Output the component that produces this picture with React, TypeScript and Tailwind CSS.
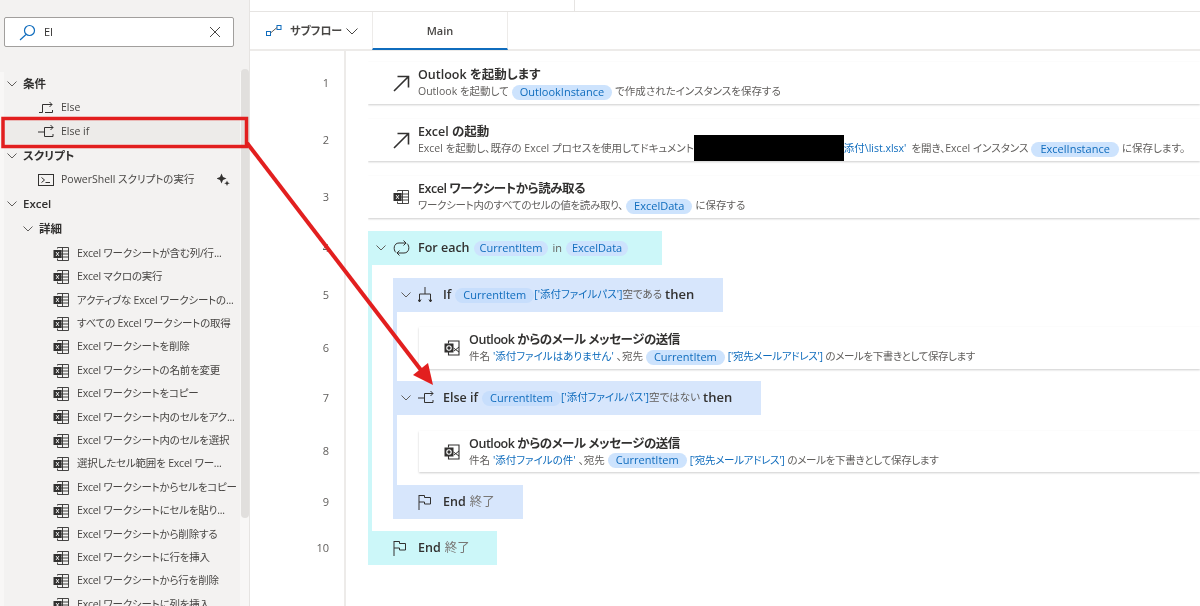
import React from "react";

const font = "font-['Open_Sans','Noto_Sans_CJK_JP',sans-serif] [font-feature-settings:'palt'] blur-[0.3px]";

function Sv({ w, h, children, cls = "" }: { w: number; h: number; children: React.ReactNode; cls?: string }) {
  return (
    <svg width={w} height={h} viewBox={`0 0 ${w} ${h}`} fill="none" stroke="currentColor" strokeWidth="1" className={`shrink-0 ${cls}`}>
      {children}
    </svg>
  );
}

const Chevron = ({ cls = "text-[#605e5c]" }: { cls?: string }) => (
  <Sv w={10} h={6} cls={cls}>
    <path d="M0.5 0.5 L5 5 L9.5 0.5" />
  </Sv>
);

const ElseIcon = () => (
  <Sv w={16} h={14} cls="text-[#323130]">
    <path d="M1 11.5h3.5V3.5H14M11.5 1L14 3.5L11.5 6M7 11.5h7.5M14.5 9v2.5" />
  </Sv>
);
const ElseIfIcon = () => (
  <Sv w={16} h={14} cls="text-[#323130]">
    <path d="M0 7h6.5M6.5 2.5v9H15M15 9v2.5M6.5 2.5H15M12.5 0L15 2.5L12.5 5" />
  </Sv>
);
const IfIcon = () => (
  <Sv w={14} h={16} cls="text-[#323130]">
    <path d="M7 0v7M1.5 15V7h11v8M0 12.5L1.5 15L3 12.5M11 12.5L12.5 15L14 12.5" />
  </Sv>
);
const LoopIcon = () => (
  <Sv w={17} h={16} cls="text-[#323130]">
    <path d="M3 12.5C0 10 0.5 3 6 3h6.5M10.5 0.5L13 3L10.5 5.5M14 3.5C17 6 16.5 13 11 13H4.5M6.5 10.5L4 13L6.5 15.5" />
  </Sv>
);
const FlagIcon = () => (
  <Sv w={14} h={16} cls="text-[#323130]">
    <path d="M1 16V1M1 1.5h5.5v2H12.5v6.5H6.5v-2H1" />
  </Sv>
);
const LaunchIcon = () => (
  <Sv w={17} h={17} cls="text-[#323130]">
    <path d="M1 16L15.5 1.5M4.5 1.5H15.5V12.5" strokeWidth="1.6" />
  </Sv>
);
const ExcelIcon = () => (
  <Sv w={16} h={14} cls="text-[#323130]">
    <path d="M4.5 1.5V0.5H15.5V13.5H4.5V11.5M9.5 0.5V13.5M4.5 4h11M4.5 7h11M4.5 10h11" strokeWidth="0.9" />
    <rect x="0.5" y="3" width="8" height="8" fill="currentColor" stroke="none" />
    <path d="M3 5l3 4M6 5L3 9" stroke="#ffffff" strokeWidth="0.9" />
  </Sv>
);
const OutlookIcon = () => (
  <Sv w={16} h={16} cls="text-[#323130]">
    <path d="M4.5 3.5V1h10.5v6M15 7v8H4.5v-3" strokeWidth="1.1" />
    <rect x="0.5" y="3.5" width="9" height="9" fill="currentColor" stroke="none" />
    <circle cx="5" cy="8" r="2.2" stroke="#ffffff" strokeWidth="1.1" />
    <path d="M9.5 8L15 12M15 7L10 11" strokeWidth="1" />
  </Sv>
);
const SubflowIcon = () => (
  <Sv w={16} h={12} cls="text-[#0f6cbd]">
    <rect x="0.5" y="6.5" width="4" height="4" />
    <rect x="11" y="0.5" width="4" height="4" />
    <path d="M4.5 8L11 2.5" stroke="#605e5c" />
  </Sv>
);

function Pill({ children, bg = "bg-[#cde3fd]", px = "px-[8px]" }: { children: React.ReactNode; bg?: string; px?: string }) {
  return <span className={`${bg} ${px} h-[15px] rounded-full inline-flex items-center text-[#0f6cbd] text-[11px] font-normal shrink-0`}>{children}</span>;
}
const Link = ({ children }: { children: React.ReactNode }) => <span className="text-[#0f6cbd]">{children}</span>;

function Card({ icon, title, children, cls = "", titleCls = "" }: { icon: React.ReactNode; title: string; children: React.ReactNode; cls?: string; titleCls?: string }) {
  return (
    <div className={`h-[42px] bg-white shadow-[0_1px_2px_rgba(0,0,0,0.2)] flex items-center whitespace-nowrap ${cls}`}>
      <div className="w-[50px] pl-[25px] shrink-0 flex">{icon}</div>
      <div className="flex flex-col">
        <div className={`h-[18px] flex items-center text-[12.5px] font-semibold text-[#323130] ${titleCls}`}>{title}</div>
        <div className="h-[15px] flex items-center gap-[3px] text-[10.5px] text-[#605e5c]">{children}</div>
      </div>
    </div>
  );
}

function Head({ w, bg, chevron = true, icon, children }: { w: string; bg: string; chevron?: boolean; icon: React.ReactNode; children: React.ReactNode }) {
  return (
    <div className={`${w} ${bg} h-[34px] flex items-center whitespace-nowrap text-[12.5px] text-[#323130]`}>
      <div className="w-[25px] pl-[8px] shrink-0 flex">{chevron && <Chevron />}</div>
      <div className="w-[25px] shrink-0 flex">{icon}</div>
      <div className="flex items-center gap-[4px]">{children}</div>
    </div>
  );
}

function SideHead({ label, indent = "pl-[3px]", h = "h-[24px]" }: { label: string; indent?: string; h?: string }) {
  return (
    <div className={`${h} ${indent} flex items-center gap-[6px] text-[11.5px] font-semibold text-[#323130]`}>
      <Chevron />
      <span>{label}</span>
    </div>
  );
}

function SideItem({ icon, label, cls = "" }: { icon: React.ReactNode; label: string; cls?: string }) {
  return (
    <div className={`h-[24px] pl-[34px] flex items-center text-[10.5px] text-[#484644] whitespace-nowrap ${cls}`}>
      <div className="w-[23px] shrink-0 flex">{icon}</div>
      <span>{label}</span>
    </div>
  );
}

const excelItems = [
  "Excel ワークシートが含む列/行...",
  "Excel マクロの実行",
  "アクティブな Excel ワークシートの...",
  "すべての Excel ワークシートの取得",
  "Excel ワークシートを削除",
  "Excel ワークシートの名前を変更",
  "Excel ワークシートをコピー",
  "Excel ワークシート内のセルをアク...",
  "Excel ワークシート内のセルを選択",
  "選択したセル範囲を Excel ワー...",
  "Excel ワークシートからセルをコピー",
  "Excel ワークシートにセルを貼り...",
  "Excel ワークシートから削除する",
  "Excel ワークシートに行を挿入",
  "Excel ワークシートから行を削除",
  "Excel ワークシートに列を挿入",
];

const numbers: [string, string][] = [
  ["1", "mt-[11px] h-[42px]"],
  ["2", "mt-[15px] h-[42px]"],
  ["3", "mt-[15px] h-[42px]"],
  ["4", "mt-[13px] h-[34px]"],
  ["5", "mt-[13px] h-[34px]"],
  ["6", "mt-[15px] h-[42px]"],
  ["7", "mt-[12px] h-[34px]"],
  ["8", "mt-[16px] h-[41px]"],
  ["9", "mt-[13px] h-[34px]"],
  ["10", "mt-[12px] h-[34px]"],
];

export default function App() {
  return (
    <div className={`${font} relative w-[1200px] h-[606px] overflow-hidden bg-white flex`}>
      {/* Sidebar */}
      <aside className="w-[250px] shrink-0 h-full bg-[#f3f2f1] border-r border-[#e6e4e2] flex flex-col overflow-hidden">
        <div className="h-[72px] shrink-0 pt-[17px] pl-[4px] pr-[15px]">
          <div className="h-[30px] bg-white border border-[#a19f9d] rounded-[2px] flex items-center pl-[14px] pr-[12px]">
            <svg width="17" height="17" viewBox="0 0 17 17" fill="none" stroke="#0f6cbd" strokeWidth="1.2" className="shrink-0">
              <circle cx="10.5" cy="6.5" r="5" />
              <path d="M7 10.5L1 16" />
            </svg>
            <span className="ml-[8px] text-[11px] text-[#323130]">EI</span>
            <svg width="12" height="12" viewBox="0 0 12 12" fill="none" stroke="#484644" strokeWidth="1" className="ml-auto shrink-0">
              <path d="M1 1L11 11M11 1L1 11" />
            </svg>
          </div>
        </div>
        <div className="flex flex-1 min-h-0 pl-[4px] bg-[#f8f7f6]">
          <div className="flex-1 min-w-0 bg-[#f3f2f1] overflow-hidden">
            <SideHead label="条件" />
            <SideItem icon={<ElseIcon />} label="Else" />
            <SideItem icon={<ElseIfIcon />} label="Else if" cls="bg-[#edebe9]" />
            <SideHead label="スクリプト" />
            <div className="relative">
              <SideItem
                icon={
                  <Sv w={16} h={14} cls="text-[#323130]">
                    <rect x="0.5" y="1.5" width="15" height="11" />
                    <path d="M3.5 4.5L6.5 7L3.5 9.5M7.5 9.5H12" />
                  </Sv>
                }
                label="PowerShell スクリプトの実行"
              />
              <svg width="13" height="13" viewBox="0 0 13 13" fill="#323130" className="absolute left-[213px] top-[5px]">
                <path d="M4.5 0.5L6 4L9.5 5.5L6 7L4.5 10.5L3 7L-0.5 5.5L3 4Z" />
                <path d="M10 7.5L10.8 9.5L12.8 10.2L10.8 11L10 13L9.2 11L7.2 10.2L9.2 9.5Z" />
              </svg>
            </div>
            <SideHead label="Excel" />
            <SideHead label="詳細" indent="pl-[19px]" h="h-[26px]" />
            {excelItems.map((t) => (
              <div key={t} className="h-[23.4px] pl-[49px] flex items-center text-[10.5px] tracking-[-0.2px] text-[#484644] whitespace-nowrap">
                <div className="w-[24px] shrink-0 flex">
                  <ExcelIcon />
                </div>
                <span>{t}</span>
              </div>
            ))}
          </div>
          <div className="w-[8px] ml-[1px] shrink-0 h-[449px] -mt-[3px] bg-[#e1dfdd] rounded-full" />
        </div>
      </aside>

      {/* Main */}
      <main className="flex-1 min-w-0 h-full flex flex-col overflow-hidden">
        <div className="h-[12px] shrink-0 border-b border-[#e6e4e2] flex">
          <div className="w-[325px] border-r border-[#e6e4e2]" />
        </div>
        <div className="h-[39px] shrink-0 border-b-2 border-[#edebe9] flex">
          <div className="w-[122px] pt-[1px] flex items-center pl-[16px]">
            <SubflowIcon />
            <span className="ml-[8px] w-[56px] text-[11px] font-semibold text-[#484644]">サブフロー</span>
            <Sv w={12} h={7} cls="text-[#484644]">
              <path d="M0.5 0.5 L6 6 L11.5 0.5" />
            </Sv>
          </div>
          <div className="w-[136px] pt-[3px] border-x border-[#edebe9] border-b-2 border-b-[#0f6cbd] flex items-center justify-center text-[11px] font-semibold text-[#484644] -mb-[1px]">
            Main
          </div>
        </div>
        <div className="flex-1 min-h-0 flex">
          <div className="w-[96px] shrink-0 border-r-2 border-[#edebe9] flex flex-col">
            {numbers.map(([n, c]) => (
              <div key={n} className={`${c} shrink-0 flex items-center justify-end pr-[15px] text-[11px] text-[#605e5c]`}>
                {n}
              </div>
            ))}
          </div>
          <div className="flex-1 min-w-0 ml-[22px] pt-[11px] overflow-hidden">
            <Card icon={<LaunchIcon />} title="Outlook を起動します">
              <span>Outlook を起動して</span>
              <Pill>OutlookInstance</Pill>
              <span>で作成されたインスタンスを保存する</span>
            </Card>
            <Card cls="mt-[15px]" icon={<LaunchIcon />} title="Excel の起動">
              <span>Excel を起動し、既存の Excel プロセスを使用してドキュメント</span>
              <span className="w-[150px] h-[26px] bg-black shrink-0 -mx-[3px] -mt-[2px]" />
              <Link>添付\list.xlsx'</Link>
              <span className="ml-[2px]">を開き、Excel インスタンス</span>
              <Pill px="px-[9px]">ExcelInstance</Pill>
              <span>に保存します。</span>
            </Card>
            <Card cls="mt-[15px]" titleCls="tracking-[-0.45px]" icon={<ExcelIcon />} title="Excel ワークシートから読み取る">
              <span className="tracking-[-0.3px]">ワークシート内のすべてのセルの値を読み取り、</span>
              <Pill>ExcelData</Pill>
              <span>に保存する</span>
            </Card>

            {/* For each */}
            <div className="mt-[13px]">
              <Head w="w-[294px]" bg="bg-[#ccf7f9]" icon={<LoopIcon />}>
                <span className="font-semibold">For each</span>
                <Pill px="px-[6px]">CurrentItem</Pill>
                <span className="text-[11px] text-[#605e5c]">in</span>
                <Pill px="px-[6px]">ExcelData</Pill>
              </Head>
              <div className="border-l-4 border-[#ccf7f9] pl-[21px] pt-[13px] pb-[12px]">
                <Head w="w-[330px]" bg="bg-[#d7e6fc]" icon={<IfIcon />}>
                  <span className="font-semibold">If</span>
                  <Pill bg="bg-[#c7defc]">CurrentItem</Pill>
                  <span className="text-[10.5px] -ml-[4px]"><Link>['添付ファイルパス']</Link><span className="text-[#605e5c]">空である</span></span>
                  <span className="font-semibold text-[13px] -ml-[1px]">then</span>
                </Head>
                <div className="border-l-4 border-[#d7e6fc] pl-[22px] pt-[15px] pb-[12px]">
                  <Card titleCls="tracking-[-0.45px]" icon={<OutlookIcon />} title="Outlook からのメール メッセージの送信">
                    <span>件名</span>
                    <Link>'添付ファイルはありません'</Link>
                    <span>、宛先</span>
                    <Pill>CurrentItem</Pill>
                    <span className="tracking-[-0.3px] text-[#0f6cbd]">['宛先メールアドレス']</span>
                    <span className="tracking-[-0.4px]">のメールを下書きとして保存します</span>
                  </Card>
                </div>
                <Head w="w-[368px]" bg="bg-[#d7e6fc]" icon={<ElseIfIcon />}>
                  <span className="font-semibold">Else if</span>
                  <Pill bg="bg-[#c7defc]">CurrentItem</Pill>
                  <span className="text-[10.5px] -ml-[4px]"><Link>['添付ファイルパス']</Link><span className="text-[#605e5c]">空ではない</span></span>
                  <span className="font-semibold text-[13px] -ml-[1px]">then</span>
                </Head>
                <div className="border-l-4 border-[#d7e6fc] pl-[22px] pt-[16px] pb-[13px]">
                  <Card cls="!h-[41px]" titleCls="tracking-[-0.45px]" icon={<OutlookIcon />} title="Outlook からのメール メッセージの送信">
                    <span>件名</span>
                    <Link>'添付ファイルの件'</Link>
                    <span>、宛先</span>
                    <Pill>CurrentItem</Pill>
                    <span className="tracking-[-0.3px] text-[#0f6cbd]">['宛先メールアドレス']</span>
                    <span className="tracking-[-0.3px]">のメールを下書きとして保存します</span>
                  </Card>
                </div>
                <Head w="w-[130px]" bg="bg-[#d7e6fc]" chevron={false} icon={<FlagIcon />}>
                  <span className="font-semibold">End</span>
                  <span className="text-[#797775]">終了</span>
                </Head>
              </div>
              <Head w="w-[129px]" bg="bg-[#ccf7f9]" chevron={false} icon={<FlagIcon />}>
                <span className="font-semibold">End</span>
                <span className="text-[#797775]">終了</span>
              </Head>
            </div>
          </div>
        </div>
      </main>

      {/* Red annotation drawn over the page */}
      <svg width="1200" height="606" viewBox="0 0 1200 606" fill="none" className="absolute left-0 top-0 pointer-events-none">
        <rect x="3" y="118.5" width="243.5" height="28" stroke="#e21f1f" strokeWidth="3.5" />
        <path d="M247 143L424 374" stroke="#e21f1f" strokeWidth="4" />
        <path d="M433 385L413 375L428 363Z" fill="#e21f1f" />
      </svg>
    </div>
  );
}
